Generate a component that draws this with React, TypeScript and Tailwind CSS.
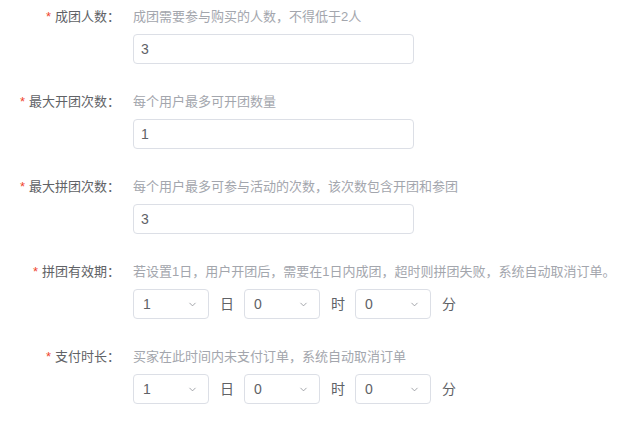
import { ChevronDown } from "lucide-react";

type Row = {
  label: string;
  tip: string;
  kind: "input" | "time";
  value?: string;
  time?: [string, string, string];
};

const rows: Row[] = [
  { label: "成团人数：", tip: "成团需要参与购买的人数，不得低于2人", kind: "input", value: "3" },
  { label: "最大开团次数：", tip: "每个用户最多可开团数量", kind: "input", value: "1" },
  { label: "最大拼团次数：", tip: "每个用户最多可参与活动的次数，该次数包含开团和参团", kind: "input", value: "3" },
  {
    label: "拼团有效期：",
    tip: "若设置1日，用户开团后，需要在1日内成团，超时则拼团失败，系统自动取消订单。",
    kind: "time",
    time: ["1", "0", "0"],
  },
  { label: "支付时长：", tip: "买家在此时间内未支付订单，系统自动取消订单", kind: "time", time: ["1", "0", "0"] },
];

const units = ["日", "时", "分"];

const Select = ({ value }: { value: string }) => (
  <div className="flex items-center justify-between w-[76px] h-[30px] border border-[#dcdfe6] rounded-[4px] bg-white pl-[9px] pr-[10px] text-[14px] text-[#606266]">
    <span>{value}</span>
    <ChevronDown className="size-[11px] text-[#909399]" strokeWidth={1.8} />
  </div>
);

const App = () => {
  return (
    <div
      className="w-[640px] h-[424px] bg-white overflow-hidden"
      style={{ fontFamily: '"Liberation Sans", "Noto Sans CJK SC", sans-serif' }}
    >
      {rows.map((row, index) => (
        <div key={index} className="flex pt-[7px] pb-[21px]">
          <div className="w-[133px] shrink-0 pr-[13px] flex justify-end items-center h-[20px] text-[13px] text-[#606266]">
            <span className="text-[#f0462d] mr-[4px]">*</span>
            <span>{row.label}</span>
          </div>

          <div className="flex flex-col gap-[7px]">
            <div className="h-[20px] leading-[20px] text-[13px] text-[#a3a6ad] whitespace-nowrap">{row.tip}</div>

            {row.kind === "input" && (
              <div className="w-[281px] h-[30px] border border-[#dcdfe6] rounded-[4px] bg-white flex items-center pl-[7px] text-[14px] text-[#606266]">
                {row.value}
              </div>
            )}

            {row.kind === "time" && row.time && (
              <div className="flex items-center">
                {row.time.map((v, i) => (
                  <div key={i} className="flex items-center">
                    <Select value={v} />
                    <span className="ml-[11px] mr-[10px] text-[14px] text-[#606266]">{units[i]}</span>
                  </div>
                ))}
              </div>
            )}
          </div>
        </div>
      ))}
    </div>
  );
};

export default App;
